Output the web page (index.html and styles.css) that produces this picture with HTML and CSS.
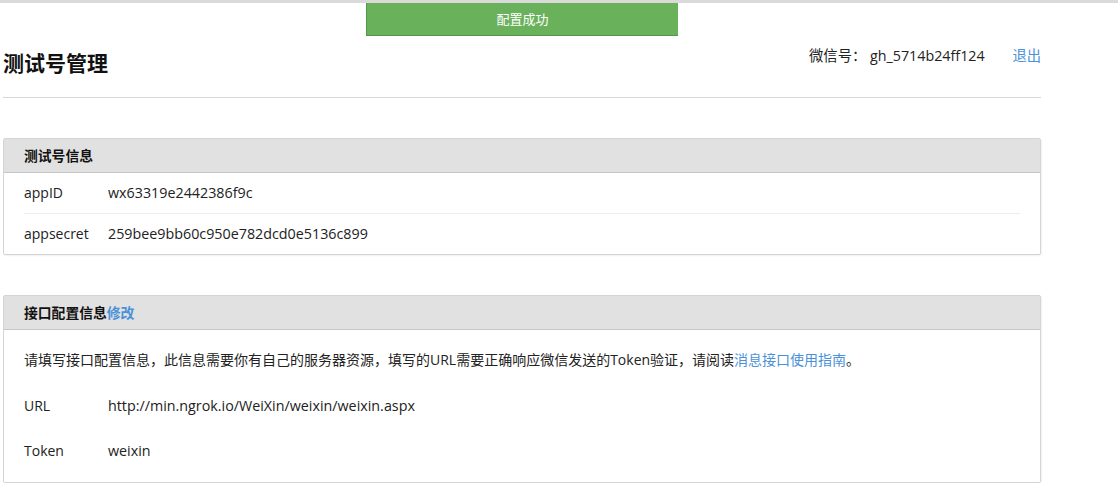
FILE: index.html
```html
<!DOCTYPE html>
<html lang="zh-CN">
<head>
    <meta charset="UTF-8">
    <meta name="viewport" content="width=device-width, initial-scale=1.0">
    <title>测试号管理</title>
    <link rel="stylesheet" href="styles.css">
</head>
<body>
    <div class="topbar"></div>
    <div class="toast">配置成功</div>

    <div class="page">
        <div class="header">
            <h1 class="title">测试号管理</h1>
            <div class="account">
                <span>微信号：&nbsp;gh_5714b24ff124</span>
                <a class="logout" href="#">退出</a>
            </div>
        </div>

        <div class="panel">
            <div class="panel-head">测试号信息</div>
            <div class="panel-body">
                <div class="row row-line">
                    <span class="label">appID</span>
                    <span class="value">wx63319e2442386f9c</span>
                </div>
                <div class="row">
                    <span class="label">appsecret</span>
                    <span class="value">259bee9bb60c950e782dcd0e5136c899</span>
                </div>
            </div>
        </div>

        <div class="panel">
            <div class="panel-head">接口配置信息<a class="link" href="#">修改</a></div>
            <div class="panel-body config">
                <p class="desc">请填写接口配置信息，此信息需要你有自己的服务器资源，填写的URL需要正确响应微信发送的Token验证，请阅读<a class="link" href="#">消息接口使用指南</a>。</p>
                <div class="row tall">
                    <span class="label">URL</span>
                    <span class="value">http://min.ngrok.io/WeiXin/weixin/weixin.aspx</span>
                </div>
                <div class="row tall">
                    <span class="label">Token</span>
                    <span class="value">weixin</span>
                </div>
            </div>
        </div>
    </div>
</body>
</html>
```

FILE: styles.css
```css
body {
    margin: 0;
    padding: 0;
    background: #fff;
    color: #222;
    font-family: 'Open Sans', 'Noto Sans CJK SC', sans-serif;
    font-size: 14px;
}

a {
    text-decoration: none;
}

.topbar {
    height: 3px;
    background: #dadada;
}

.toast {
    position: absolute;
    top: 3px;
    left: 366px;
    width: 311px;
    height: 32px;
    line-height: 32px;
    background: #6ab15c;
    border-left: 1px solid #55954a;
    border-bottom: 1px solid #55954a;
    color: #fff;
    font-size: 13px;
    text-align: center;
}

.page {
    width: 1038px;
    margin-left: 3px;
}

.header {
    display: flex;
    justify-content: space-between;
    align-items: flex-start;
    padding: 45px 0 19px;
    border-bottom: 1px solid #d8d8d8;
}

.title {
    margin: 0;
    font-size: 21px;
    line-height: 30px;
    font-weight: bold;
    color: #111;
}

.account {
    line-height: 16px;
    color: #222;
    font-size: 14.3px;
}

.logout {
    margin-left: 24px;
    color: #4b91d8;
}

.link {
    color: #4b91d8;
}

.panel {
    margin-top: 40px;
    border: 1px solid #d4d4d4;
    border-radius: 2px;
    box-shadow: 1px 1px 2px rgba(0,0,0,0.06);
}

.panel-head {
    height: 33px;
    line-height: 33px;
    padding: 0 20px;
    background: #e1e1e1;
    border-bottom: 1px solid #c6c6c6;
    font-size: 13.8px;
    font-weight: bold;
    color: #111;
}

.panel-body {
    padding: 0 20px;
}

.row {
    display: flex;
    height: 40px;
    line-height: 40px;
}

.row-line {
    border-bottom: 1px solid #ececec;
}

.label {
    width: 84px;
    flex-shrink: 0;
}

.value {
    font-size: 14.3px;
}

.config {
    padding: 20px 20px 9px;
}

.desc {
    margin: 0 0 13px;
    line-height: 20px;
}

.row.tall {
    height: 45px;
    line-height: 45px;
}
```
